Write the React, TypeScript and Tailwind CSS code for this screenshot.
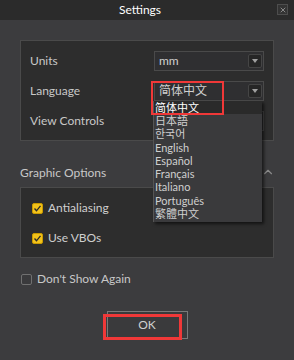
import { ChevronUp, X } from 'lucide-react'

const font = { fontFamily: 'Lato, "Noto Sans CJK SC", sans-serif' }

const langs = ['简体中文', '日本語', '한국어', 'English', 'Español', 'Français', 'Italiano', 'Português', '繁體中文']

function Combo({ value }: { value?: string }) {
  return (
    <div className="relative w-[110px] h-[20px] border border-[#4a4a4a] bg-[#2f2f31] flex items-center pl-[4px]">
      <span className="text-[12px] text-[#cfcfcf] leading-[14px]">{value}</span>
      <div className="absolute right-[1px] top-[2px] w-[14px] h-[14px] rounded-[2px] border border-[#454545] bg-[#262626] flex items-center justify-center">
        <div className="w-0 h-0 border-l-[3px] border-r-[3px] border-t-[4px] border-l-transparent border-r-transparent border-t-[#a0a0a0]" />
      </div>
    </div>
  )
}

function Check({ label }: { label: string }) {
  return (
    <div className="flex items-center gap-[5px] h-[12px]">
      <div className="w-[11px] h-[11px] rounded-[2px] bg-[#f2c21b] border border-[#c99a00] flex items-center justify-center">
        <svg width="9" height="9" viewBox="0 0 9 9">
          <path d="M1.5 4.5 L3.5 6.8 L7.5 1.8" stroke="#2a2a2a" strokeWidth="1.3" fill="none" />
        </svg>
      </div>
      <span className="text-[12px] leading-[14px] text-[#cfcfcf]">{label}</span>
    </div>
  )
}

export default function App() {
  return (
    <div className="w-[294px] h-[360px] bg-[#3c3c3e] flex flex-col relative overflow-hidden" style={font}>
      {/* title bar */}
      <div className="h-[20px] bg-[#2b2b2b] relative flex items-center justify-center pr-[14px]">
        <span className="text-[12px] leading-[14px] text-white">Settings</span>
        <div className="absolute right-[6px] top-[4px] w-[11px] h-[11px] border border-[#4d4d4d] bg-[#333] flex items-center justify-center">
          <X size={8} strokeWidth={2.5} className="text-[#9a9a9a]" />
        </div>
      </div>

      <div className="flex flex-col px-[20px] pt-[20px]">
        <div className="h-[101px] border border-[#4a4a4a] bg-[#2d2d2d] flex flex-col gap-[10px] pt-[10px] pl-[9px] pr-[9px]">
          <div className="flex items-center justify-between h-[20px]">
            <span className="text-[12px] leading-[14px] text-[#c8c8c8]">Units</span>
            <Combo value="mm" />
          </div>
          <div className="flex items-center justify-between h-[20px]">
            <span className="text-[12px] leading-[14px] text-[#c8c8c8]">Language</span>
            <Combo value="简体中文" />
          </div>
          <div className="flex items-center justify-between h-[20px]">
            <span className="text-[12px] leading-[14px] text-[#c8c8c8]">View Controls</span>
            <Combo />
          </div>
        </div>

        <div className="h-[46px] flex items-start justify-between pt-[25px]">
          <span className="text-[12px] leading-[14px] text-[#c8c8c8]">Graphic Options</span>
          <ChevronUp size={14} strokeWidth={2} className="text-[#8a8a8a] mr-[-1px] -mt-[1px]" />
        </div>

        <div className="h-[71px] border border-[#4a4a4a] bg-[#2d2d2d] flex flex-col gap-[18px] pt-[14px] pl-[11px]">
          <Check label="Antialiasing" />
          <Check label="Use VBOs" />
        </div>

        <div className="flex items-center gap-[5px] h-[12px] mt-[15px] ml-[1px]">
          <div className="w-[11px] h-[11px] rounded-[2px] border border-[#707070] bg-[#3a3a3c]" />
          <span className="text-[12px] leading-[14px] text-[#c8c8c8]">Don't Show Again</span>
        </div>

        <div className="flex justify-center mt-[26px]">
          <div className="w-[81px] h-[28px] border border-[#7a7a7a] bg-[#3a3a3c] flex items-center justify-center">
            <span className="text-[12px] leading-[14px] text-[#d0d0d0]">OK</span>
          </div>
        </div>
      </div>

      {/* dropdown list */}
      <div className="absolute left-[153px] top-[101px] w-[109px] bg-[#3a3a3c] border-l border-[#555] shadow-[2px_2px_3px_rgba(0,0,0,0.6)] flex flex-col pb-[2px]">
        {langs.map((l, i) => (
          <div
            key={l}
            className={i === 0 ? 'h-[13px] pl-[1px] text-[11px] leading-[13px] text-white bg-[#2a2a2a] overflow-hidden' : 'h-[13.3px] pl-[1px] text-[11px] leading-[13px] text-[#cfcfcf] overflow-hidden'}
          >
            {l}
          </div>
        ))}
      </div>

      {/* annotation boxes */}
      <div className="absolute left-[151px] top-[81px] w-[73px] h-[34px] border-[2px] border-[#f03838]" />
      <div className="absolute left-[103px] top-[314px] w-[79px] h-[26px] border-[3px] border-[#f03838]" />
    </div>
  )
}
